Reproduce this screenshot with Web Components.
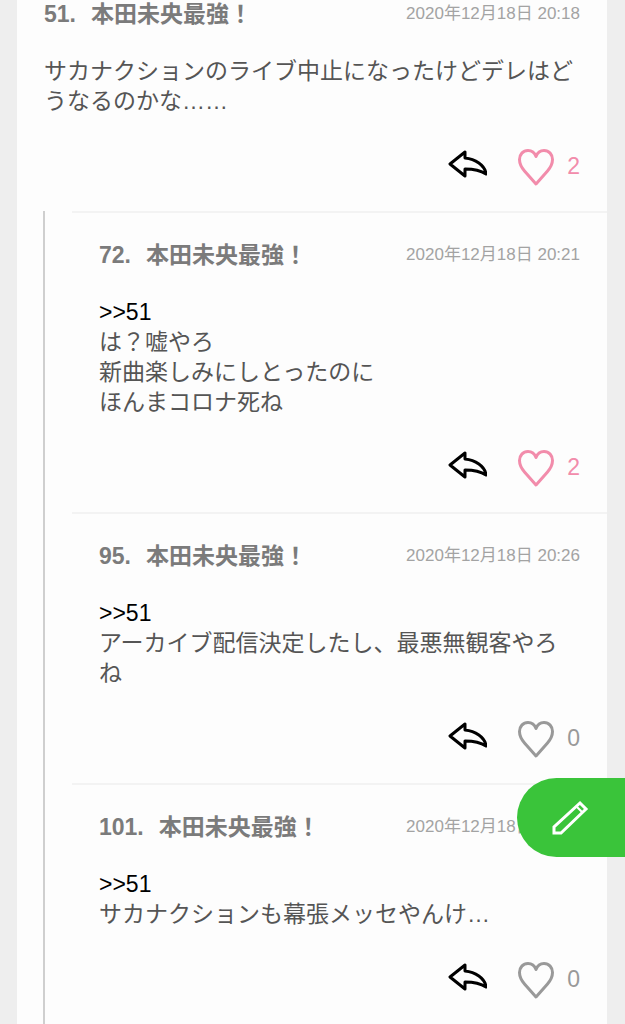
<!DOCTYPE html>
<html lang="ja">
<head>
<meta charset="UTF-8">
<meta name="viewport" content="width=device-width, initial-scale=1">
<title>コメント</title>
<style>
    body {
        margin: 0;
        background: #eeeeee;
        font-family: "Liberation Sans", "Noto Sans CJK JP", sans-serif;
        font-size: 23px;
        line-height: 30px;
        color: #555555;
        overflow-x: hidden;
    }
</style>
</head>
<body>
<comment-board>
    <comment-post number="51" name="本田未央最強！" date="2020年12月18日 20:18" likes="2" liked>サカナクションのライブ中止になったけどデレはどうなるのかな……</comment-post>
    <comment-thread slot="replies">
        <comment-post number="72" name="本田未央最強！" date="2020年12月18日 20:21" likes="2" reply-to="51" liked>は？嘘やろ<br>新曲楽しみにしとったのに<br>ほんまコロナ死ね</comment-post>
        <comment-post number="95" name="本田未央最強！" date="2020年12月18日 20:26" likes="0" reply-to="51">アーカイブ配信決定したし、最悪無観客やろね</comment-post>
        <comment-post number="101" name="本田未央最強！" date="2020年12月18日 20:29" likes="0" reply-to="51">サカナクションも幕張メッセやんけ…</comment-post>
    </comment-thread>
</comment-board>
<write-button></write-button>

<script>
// comment-board
class CommentBoard extends HTMLElement {
    constructor() {
        super();
        this.attachShadow({ mode: 'open' });
    }

    connectedCallback() {
        this.shadowRoot.innerHTML = `
            <style>
                :host {
                    display: block;
                    overflow: hidden;
                }

                main {
                    margin: -30px 18px 0 17px;
                    background: #fdfdfd;
                }
            </style>

            <main>
                <slot></slot>
                <slot name="replies"></slot>
            </main>
        `;
    }
}

// comment-thread
class CommentThread extends HTMLElement {
    constructor() {
        super();
        this.attachShadow({ mode: 'open' });
    }

    connectedCallback() {
        this.shadowRoot.innerHTML = `
            <style>
                :host {
                    display: block;
                    margin-left: 26px;
                    padding-left: 27px;
                    border-left: 2px solid #cfcfcf;
                }
            </style>

            <slot></slot>
        `;
    }
}

// comment-post
class CommentPost extends HTMLElement {
    constructor() {
        super();
        this.attachShadow({ mode: 'open' });
    }

    connectedCallback() {
        this.render();
        this.attachEventListeners();
    }

    render() {
        const number = this.getAttribute('number');
        const replyTo = this.getAttribute('reply-to');

        this.shadowRoot.innerHTML = `
            <style>
                :host {
                    display: block;
                    padding: 27px 27px 25px;
                    border-top: 2px solid #f3f3f3;
                }

                header {
                    display: flex;
                    justify-content: space-between;
                    align-items: center;
                    margin-bottom: 27px;
                    white-space: nowrap;
                }

                h2 {
                    display: flex;
                    gap: 15px;
                    margin: 0;
                    font-size: 23px;
                    font-weight: bold;
                    color: #7b7b7b;
                }

                time {
                    font-size: 17px;
                    color: #a3a3a3;
                }

                .anchor {
                    display: block;
                    width: fit-content;
                    color: #000000;
                    text-decoration: none;
                }

                footer {
                    display: flex;
                    justify-content: flex-end;
                    gap: 29px;
                    margin-top: 30px;
                }

                button {
                    display: flex;
                    align-items: center;
                    gap: 11px;
                    padding: 0;
                    border: 0;
                    background: none;
                    font: inherit;
                    color: #999999;
                    cursor: pointer;
                }

                svg {
                    width: 40px;
                    height: 40px;
                    fill: none;
                    stroke: currentColor;
                    stroke-width: 3;
                    stroke-linejoin: round;
                }

                .reply {
                    color: #000000;
                }

                :host([liked]) .like {
                    color: #f28cab;
                }
            </style>

            <article>
                <header>
                    <h2><span>${number}.</span><span>${this.getAttribute('name')}</span></h2>
                    <time>${this.getAttribute('date')}</time>
                </header>
                <div>
                    ${replyTo ? `<a class="anchor" href="#${replyTo}">&gt;&gt;${replyTo}</a>` : ''}
                    <slot></slot>
                </div>
                <footer>
                    <button class="reply" type="button" aria-label="返信">
                        <svg viewBox="0 0 40 40"><path d="M3 18 18 6V12C28 13 38 19 39 28C33 24 26 23 18 23V30Z"/></svg>
                    </button>
                    <button class="like" type="button" aria-label="いいね">
                        <svg viewBox="0 0 40 40"><path d="M20 10.5C18.5 6.5 15.5 4.5 12 4.5C7 4.5 3.5 8.5 3.5 13.5C3.5 18 5.5 21.5 8.5 25L20 38L31.5 25C34.500 21.5 36.500 18 36.500 13.500C36.500 8.500 33 4.500 28 4.500C24.500 4.500 21.500 6.500 20 10.500Z"/></svg>
                        <span class="count">${this.getAttribute('likes')}</span>
                    </button>
                </footer>
            </article>
        `;
    }

    attachEventListeners() {
        this.shadowRoot.querySelector('.like').addEventListener('click', () => {
            const count = this.shadowRoot.querySelector('.count');
            const liked = this.toggleAttribute('liked');
            count.textContent = Number(count.textContent) + (liked ? 1 : -1);
        });
    }
}

// write-button
class WriteButton extends HTMLElement {
    constructor() {
        super();
        this.attachShadow({ mode: 'open' });
    }

    connectedCallback() {
        this.shadowRoot.innerHTML = `
            <style>
                :host {
                    display: block;
                    position: fixed;
                    right: 0;
                    bottom: 167px;
                }

                button {
                    display: flex;
                    align-items: center;
                    width: 108px;
                    height: 79px;
                    padding: 0 0 0 33px;
                    border: 0;
                    border-radius: 40px 0 0 40px;
                    background: #3ac43a;
                    color: #ffffff;
                    cursor: pointer;
                }

                svg {
                    width: 40px;
                    height: 40px;
                    fill: none;
                    stroke: currentColor;
                    stroke-width: 3;
                    stroke-linejoin: miter;
                }
            </style>

            <button type="button" aria-label="コメントを書く">
                <svg viewBox="0 0 40 40"><path d="M4 35V29L30 5L36 11L11 35Z"/><path d="M27 9 32 14" stroke-width="2"/></svg>
            </button>
        `;
    }
}

customElements.define('comment-board', CommentBoard);
customElements.define('comment-thread', CommentThread);
customElements.define('comment-post', CommentPost);
customElements.define('write-button', WriteButton);
</script>
</body>
</html>
